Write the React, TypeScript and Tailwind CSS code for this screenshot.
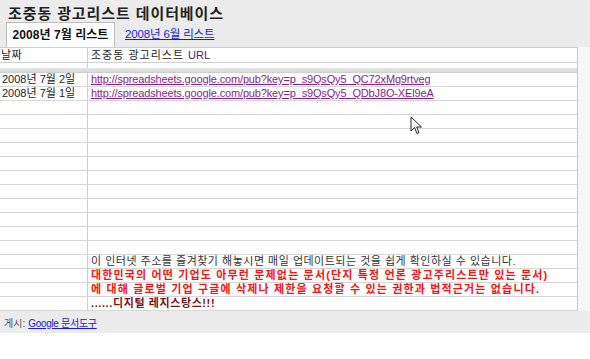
import React from "react";

const font = { fontFamily: '"Liberation Sans", "Noto Sans CJK KR", sans-serif' };

function Row({ left, right, cls = "" }: { left?: React.ReactNode; right?: React.ReactNode; cls?: string }) {
  return (
    <div className="flex h-[14px] border-b border-[#d6d6d6]">
      <div className="w-[88px] border-r border-[#cfcfcf] pl-[2px] text-[11px] leading-[13px] text-[#222] whitespace-nowrap overflow-hidden">{left}</div>
      <div className={"flex-1 pl-[3px] text-[11px] leading-[13px] whitespace-nowrap overflow-visible " + cls}>{right}</div>
    </div>
  );
}

export default function App() {
  const empty = Array.from({ length: 11 });
  return (
    <div className="relative w-[590px] h-[359px] bg-white overflow-hidden" style={font}>
      {/* header */}
      <div className="bg-[#ececec] pl-[8px] pt-[5px] h-[47px] flex flex-col">
        <div className="text-[15px] font-bold leading-[17px] text-[#222] tracking-[0.9px]">조중동 광고리스트 데이터베이스</div>
        <div className="flex items-end h-[25px] -ml-[2px]">
          <div className="h-[25px] w-[109px] bg-white border border-b-0 border-[#bdbdbd] flex items-center justify-center text-[12px] font-bold text-[#111] leading-none tracking-[0.05px]">
            2008년 7월 리스트
          </div>
          <div className="ml-[10px] h-[25px] flex items-center text-[11.5px] text-[#1a1adc] underline leading-none tracking-[-0.15px]">
            2008년 6월 리스트
          </div>
        </div>
      </div>

      {/* table */}
      <div className="flex">
        <div className="w-[578px] border-r border-[#c8c8c8]">
          <div className="flex h-[16px] border-t border-b border-[#cfcfcf]">
            <div className="w-[88px] border-r border-[#cfcfcf] pl-[1px] text-[11px] leading-[14px] text-[#222] tracking-[0.5px]">날짜</div>
            <div className="flex-1 pl-[3px] text-[11px] leading-[14px] text-[#222] tracking-[1px]">
              조중동 광고리스트 <span className="text-[#3b2377] tracking-[0px]">URL</span>
            </div>
          </div>
          <div className="flex h-[5px]">
            <div className="w-[88px] border-r border-[#cfcfcf]" />
            <div className="flex-1" />
          </div>
          <div className="h-[5px] bg-gradient-to-b from-[#e6e6e6] to-[#d9d9d9] border-b border-[#d0d0d0]" />
          <Row
            left="2008년 7월 2일"
            right={<span className="text-[#8b1c8f] underline tracking-[-0.15px]">http://spreadsheets.google.com/pub?key=p_s9QsQy5_QC72xMg9rtveg</span>}
          />
          <Row
            left="2008년 7월 1일"
            right={<span className="text-[#8b1c8f] underline tracking-[-0.15px]">http://spreadsheets.google.com/pub?key=p_s9QsQy5_QDbJ8O-XEl9eA</span>}
          />
          {empty.map((_, i) => (
            <Row key={i} />
          ))}
          <Row right={<span className="text-[#333] tracking-[0.5px]">이 인터넷 주소를 즐겨찾기 해놓시면 매일 업데이트되는 것을 쉽게 확인하실 수 있습니다.</span>} />
          <Row
            right={<span className="text-[#ff1010] font-bold tracking-[1.15px]">대한민국의 어떤 기업도 아무런 문제없는 문서(단지 특정 언론 광고주리스트만 있는 문서)</span>}
          />
          <Row
            right={<span className="text-[#ff1010] font-bold tracking-[1.15px]">에 대해 글로벌 기업 구글에 삭제나 제한을 요청할 수 있는 권한과 법적근거는 없습니다.</span>}
          />
          <Row right={<span className="text-[#7a1414] font-bold tracking-[0.6px]">......디지털 레지스탕스!!!</span>} />
        </div>
        <div className="flex-1 bg-[#f7f7f7]" />
      </div>

      {/* footer */}
      <div className="bg-[#ececec] h-[22px] flex items-center pl-[4px] pt-[3px] text-[10px]">
        <span className="text-[#555]">게시:</span>
        <span className="ml-[3px] text-[#1a1adc] underline tracking-[-0.3px]">Google 문서도구</span>
      </div>

      {/* mouse cursor */}
      <svg className="absolute left-[410px] top-[116px]" width="13" height="19" viewBox="0 0 13 19">
        <path d="M1 1 L1 15 L4.5 11.5 L7 17.5 L9 16.6 L6.6 11 L11.5 11 Z" fill="white" stroke="#222" strokeWidth="1" strokeLinejoin="miter" />
      </svg>
    </div>
  );
}
